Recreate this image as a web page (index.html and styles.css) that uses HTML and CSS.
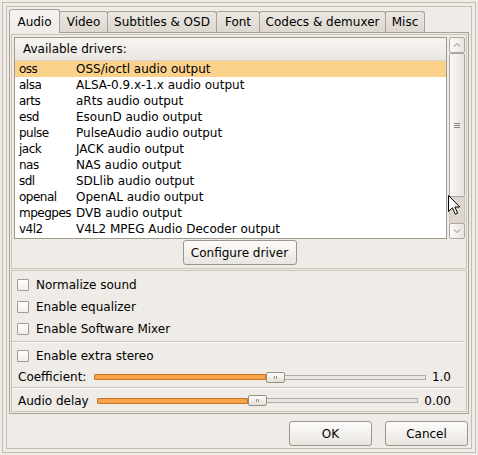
FILE: index.html
```html
<!DOCTYPE html>
<html>
<head>
<meta charset="utf-8">
<link rel="stylesheet" href="styles.css">
</head>
<body>
<div class="outer">
  <div class="inner">
    <div class="tabbar">
      <div class="tab sel t-audio">Audio</div>
      <div class="tab t-video">Video</div>
      <div class="tab t-subs">Subtitles &amp; OSD</div>
      <div class="tab t-font">Font</div>
      <div class="tab t-codecs">Codecs &amp; demuxer</div>
      <div class="tab t-misc">Misc</div>
    </div>
    <div class="pane">
      <div class="frame upper">
        <div class="listrow">
          <div class="listbox">
            <div class="lhead">Available drivers:</div>
            <div class="item sel"><span class="c1">oss</span><span>OSS/ioctl audio output</span></div>
            <div class="item"><span class="c1">alsa</span><span>ALSA-0.9.x-1.x audio output</span></div>
            <div class="item"><span class="c1">arts</span><span>aRts audio output</span></div>
            <div class="item"><span class="c1">esd</span><span>EsounD audio output</span></div>
            <div class="item"><span class="c1">pulse</span><span>PulseAudio audio output</span></div>
            <div class="item"><span class="c1">jack</span><span>JACK audio output</span></div>
            <div class="item"><span class="c1">nas</span><span>NAS audio output</span></div>
            <div class="item"><span class="c1">sdl</span><span>SDLlib audio output</span></div>
            <div class="item"><span class="c1">openal</span><span>OpenAL audio output</span></div>
            <div class="item"><span class="c1">mpegpes</span><span>DVB audio output</span></div>
            <div class="item"><span class="c1">v4l2</span><span>V4L2 MPEG Audio Decoder output</span></div>
          </div>
          <div class="vscroll">
            <div class="sbtn"><svg width="14" height="14" viewBox="0 0 14 14"><path d="M4 8.5 L7 5.5 L10 8.5" fill="none" stroke="#8d847a" stroke-width="1"/></svg></div>
            <div class="thumb"><svg width="8" height="7" viewBox="0 0 8 7"><path d="M1 1.5H7M1 3.5H7M1 5.5H7" stroke="#8d847a" stroke-width="1"/></svg></div>
            <div class="track"></div>
            <div class="sbtn"><svg width="14" height="14" viewBox="0 0 14 14"><path d="M4 5.5 L7 8.5 L10 5.5" fill="none" stroke="#8d847a" stroke-width="1"/></svg></div>
          </div>
        </div>
        <div class="cfgrow"><div class="btn cfg">Configure driver</div></div>
      </div>
      <div class="frame lower">
        <div class="chkrow"><span class="box"></span><span>Normalize sound</span></div>
        <div class="chkrow"><span class="box"></span><span>Enable equalizer</span></div>
        <div class="chkrow"><span class="box"></span><span>Enable Software Mixer</span></div>
        <div class="sep sep1"></div>
        <div class="chkrow"><span class="box"></span><span>Enable extra stereo</span></div>
        <div class="slrow coef">
          <span class="lbl">Coefficient:</span>
          <div class="slider"><div class="fill" style="width:51.7%"></div><div class="handle"></div><div class="rest"></div></div>
          <span class="val">1.0</span>
        </div>
        <div class="sep sep2"></div>
        <div class="slrow delay">
          <span class="lbl">Audio delay</span>
          <div class="slider"><div class="fill" style="width:46.9%"></div><div class="handle"></div><div class="rest"></div></div>
          <span class="val">0.00</span>
        </div>
      </div>
    </div>
    <div class="dlgbtns">
      <div class="btn dlg">OK</div>
      <div class="btn dlg">Cancel</div>
    </div>
  </div>
</div>
<svg class="cursor" width="13" height="21" viewBox="0 0 13 21"><path d="M0.5 0.5 L0.5 16.5 L4.5 12.8 L7.3 19.2 L9.6 18.2 L6.9 12 L11.8 12 Z" fill="#fff" stroke="#000" stroke-width="1" stroke-linejoin="miter"/></svg>
</body>
</html>
```

FILE: styles.css
```css
html, body {
  margin: 0;
  padding: 0;
}
body {
  width: 478px;
  height: 455px;
  overflow: hidden;
  background: #efebe7;
  font-family: "DejaVu Sans", "Liberation Sans", sans-serif;
  font-size: 12px;
  color: #000;
  position: relative;
}
.outer {
  margin: 2px;
  height: 451px;
  box-sizing: border-box;
  border: 1px solid #c6beb5;
  padding: 3px;
}
.inner {
  height: 100%;
  box-sizing: border-box;
  border: 1px solid #c6beb5;
  padding: 2px;
  display: flex;
  flex-direction: column;
}
.tabbar {
  position: relative;
  z-index: 1;
  display: flex;
  align-items: flex-start;
  height: 24px;
  margin-bottom: -1px;
}
.tab {
  box-sizing: border-box;
  height: 21px;
  margin-top: 2px;
  margin-left: -1px;
  border: 1px solid #aaa197;
  border-bottom: none;
  border-radius: 3px 3px 0 0;
  background: linear-gradient(#ebe7e2, #ddd7d0);
  display: flex;
  align-items: center;
  justify-content: center;
  white-space: nowrap;
  padding-bottom: 1px;
}
.tab.sel {
  height: 24px;
  margin-top: 0;
  margin-left: 0;
  background: linear-gradient(#f6f4f1, #efebe7);
  padding-bottom: 0;
}
.t-audio { width: 51px; }
.t-video { width: 49px; }
.t-subs { width: 110px; }
.t-font { width: 44px; }
.t-codecs { width: 127px; }
.t-misc { width: 40px; }

.pane {
  height: 382px;
  box-sizing: border-box;
  border: 1px solid #aaa197;
  background: #efebe7;
  padding: 1px;
  display: flex;
  flex-direction: column;
  gap: 1px;
}
.frame {
  box-sizing: border-box;
  border: 1px solid #cdc5bc;
}
.upper {
  height: 235px;
  padding: 2px 1px 3px 2px;
  display: flex;
  flex-direction: column;
}
.listrow {
  display: flex;
  gap: 2px;
  height: 202px;
}
.listbox {
  width: 433px;
  height: 202px;
  box-sizing: border-box;
  border: 1px solid #a0978d;
  background: #fff;
  overflow: hidden;
}
.lhead {
  height: 23px;
  box-sizing: border-box;
  padding-left: 8px;
  display: flex;
  align-items: center;
  background: linear-gradient(#f7f5f2, #ebe7e2);
  border-bottom: 1px solid #d9d3cc;
}
.item {
  height: 16px;
  display: flex;
  align-items: center;
  padding-left: 4px;
  white-space: nowrap;
}
.item.sel {
  background: #fbd28b;
}
.c1 {
  width: 57px;
  flex: none;
  letter-spacing: -0.5px;
}
.vscroll {
  width: 16px;
  height: 202px;
  display: flex;
  flex-direction: column;
}
.sbtn {
  height: 16px;
  box-sizing: border-box;
  border: 1px solid #aea59b;
  border-radius: 2px;
  background: linear-gradient(90deg, #fbfaf8, #e8e4df);
  display: flex;
  align-items: center;
  justify-content: center;
  flex: none;
}
.thumb {
  height: 144px;
  box-sizing: border-box;
  border: 1px solid #aea59b;
  border-radius: 2px;
  background: linear-gradient(90deg, #fbfaf8, #e6e2dd);
  display: flex;
  align-items: center;
  justify-content: center;
  flex: none;
}
.track {
  flex: 1;
  background: #dcd6cf;
  border-left: 1px solid #c9c1b8;
  border-right: 1px solid #c9c1b8;
}
.cfgrow {
  margin-top: 1px;
  display: flex;
  justify-content: center;
}
.btn {
  box-sizing: border-box;
  height: 25px;
  border: 1px solid #9d948a;
  border-radius: 3px;
  background: linear-gradient(#fdfcfb, #e9e5e0);
  display: flex;
  align-items: center;
  justify-content: center;
  white-space: nowrap;
}
.cfg {
  width: 114px;
}
.lower {
  flex: 1;
  padding: 3px 15px 0 5px;
  display: flex;
  flex-direction: column;
}
.chkrow {
  height: 22px;
  display: flex;
  align-items: center;
  gap: 7px;
  flex: none;
}
.box {
  width: 12px;
  height: 12px;
  box-sizing: border-box;
  border: 1px solid #a39a91;
  border-radius: 1px;
  background: linear-gradient(#ffffff, #f1eeea);
  flex: none;
}
.sep {
  height: 0;
  border-top: 1px solid #cbc3ba;
  border-bottom: 1px solid #fbfaf9;
  margin-left: -5px;
  margin-right: -13px;
  flex: none;
}
.sep1 {
  margin-top: 1px;
  margin-bottom: 2px;
}
.sep2 {
  margin-bottom: 1px;
}
.slrow {
  display: flex;
  align-items: center;
  flex: none;
  padding-left: 1px;
}
.slrow.coef { height: 20px; }
.slrow.delay { height: 21px; }
.lbl {
  white-space: nowrap;
}
.slider {
  flex: 1;
  margin-left: 8px;
  display: flex;
  align-items: center;
  height: 12px;
}
.fill {
  height: 6px;
  box-sizing: border-box;
  border: 1px solid #c47422;
  border-radius: 1px 0 0 1px;
  background: #f8a24a;
  flex: none;
}
.handle {
  width: 19px;
  height: 11px;
  box-sizing: border-box;
  border: 1px solid #988f85;
  border-radius: 2px;
  background: linear-gradient(#fefdfc, #e3ded8);
  flex: none;
  display: flex;
  align-items: center;
  justify-content: center;
}
.handle::after {
  content: "";
  width: 1px;
  height: 3px;
  border-left: 1px solid #999087;
  border-right: 1px solid #999087;
}
.rest {
  flex: 1;
  height: 5px;
  box-sizing: border-box;
  border: 1px solid #b4aba1;
  border-left: none;
  background: #e9e5e0;
}
.val {
  margin-left: 6px;
  white-space: nowrap;
}
.dlgbtns {
  margin-top: 7px;
  display: flex;
  justify-content: flex-end;
  gap: 13px;
  padding-right: 1px;
}
.dlg {
  width: 83px;
}
.cursor {
  position: absolute;
  left: 448px;
  top: 195px;
}
```
